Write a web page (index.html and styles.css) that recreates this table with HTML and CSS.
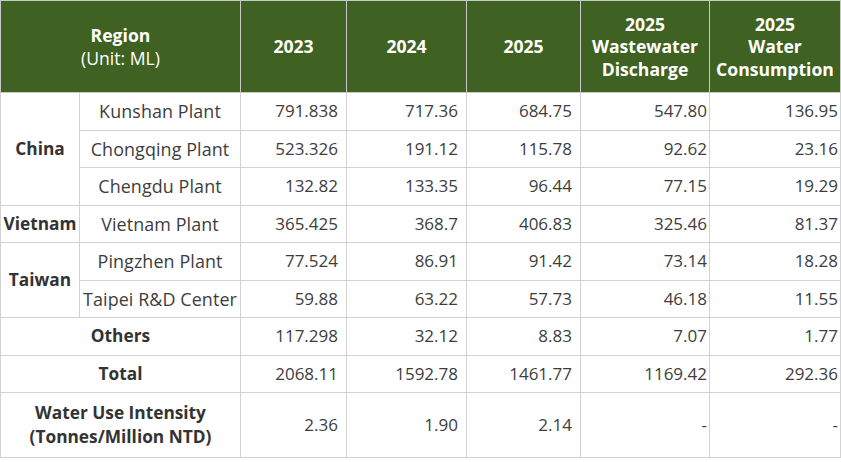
FILE: index.html
```html
<!DOCTYPE html>
<html lang="en">
<head>
<meta charset="utf-8">
<title>Water Use by Region</title>
<link rel="stylesheet" href="styles.css">
</head>
<body>
<table class="water-table">
  <colgroup>
    <col class="c-region">
    <col class="c-site">
    <col class="c-2023">
    <col class="c-2024">
    <col class="c-2025">
    <col class="c-waste">
    <col class="c-cons">
  </colgroup>
  <thead>
    <tr>
      <th colspan="2"><span class="strong">Region</span><br><span class="unit">(Unit: ML)</span></th>
      <th>2023</th>
      <th>2024</th>
      <th>2025</th>
      <th>2025<br>Wastewater<br>Discharge</th>
      <th>2025<br>Water<br>Consumption</th>
    </tr>
  </thead>
  <tbody>
    <tr>
      <td class="group" rowspan="3">China</td>
      <td class="site">Kunshan Plant</td>
      <td class="num">791.838</td><td class="num">717.36</td><td class="num">684.75</td><td class="num tight">547.80</td><td class="num tight">136.95</td>
    </tr>
    <tr>
      <td class="site">Chongqing Plant</td>
      <td class="num">523.326</td><td class="num">191.12</td><td class="num">115.78</td><td class="num tight">92.62</td><td class="num tight">23.16</td>
    </tr>
    <tr>
      <td class="site">Chengdu Plant</td>
      <td class="num">132.82</td><td class="num">133.35</td><td class="num">96.44</td><td class="num tight">77.15</td><td class="num tight">19.29</td>
    </tr>
    <tr>
      <td class="group">Vietnam</td>
      <td class="site">Vietnam Plant</td>
      <td class="num">365.425</td><td class="num">368.7</td><td class="num">406.83</td><td class="num tight">325.46</td><td class="num tight">81.37</td>
    </tr>
    <tr>
      <td class="group" rowspan="2">Taiwan</td>
      <td class="site">Pingzhen Plant</td>
      <td class="num">77.524</td><td class="num">86.91</td><td class="num">91.42</td><td class="num tight">73.14</td><td class="num tight">18.28</td>
    </tr>
    <tr>
      <td class="site">Taipei R&amp;D Center</td>
      <td class="num">59.88</td><td class="num">63.22</td><td class="num">57.73</td><td class="num tight">46.18</td><td class="num tight">11.55</td>
    </tr>
    <tr>
      <td class="group" colspan="2">Others</td>
      <td class="num">117.298</td><td class="num">32.12</td><td class="num">8.83</td><td class="num tight">7.07</td><td class="num tight">1.77</td>
    </tr>
    <tr>
      <td class="group" colspan="2">Total</td>
      <td class="num">2068.11</td><td class="num">1592.78</td><td class="num">1461.77</td><td class="num tight">1169.42</td><td class="num tight">292.36</td>
    </tr>
    <tr class="intensity">
      <td class="group" colspan="2">Water Use Intensity<br>(Tonnes/Million NTD)</td>
      <td class="num">2.36</td><td class="num">1.90</td><td class="num">2.14</td><td class="num tight">-</td><td class="num tight">-</td>
    </tr>
  </tbody>
</table>
</body>
</html>
```

FILE: styles.css
```css
html, body {
  margin: 0;
  padding: 0;
  background: #ffffff;
}

body {
  font-family: "Open Sans", "Noto Sans", "Liberation Sans", sans-serif;
  font-size: 17px;
  color: #3d3d3d;
}

.water-table {
  border-collapse: collapse;
  table-layout: fixed;
  width: 840px;
  border: 1px solid #c4c4c4;
}

.c-region { width: 79px; }
.c-site { width: 161px; }
.c-2023 { width: 106px; }
.c-2024 { width: 120px; }
.c-2025 { width: 114px; }
.c-waste { width: 129px; }
.c-cons { width: 131px; }

.water-table th,
.water-table td {
  border: 1px solid #d2d2d2;
  padding: 0;
  vertical-align: middle;
  white-space: nowrap;
}

.water-table thead tr {
  height: 92px;
}

.water-table th {
  background: #3f6121;
  color: #ffffff;
  font-weight: 700;
  font-size: 17.6px;
  text-align: center;
  line-height: 22.5px;
  border-color: #c9c9c9;
}

.water-table th .unit {
  font-weight: 400;
}

.water-table tbody tr {
  height: 37.5px;
}

.water-table tbody tr.intensity {
  height: 65px;
}

.water-table td {
  line-height: 22px;
}

.group {
  font-weight: 700;
  font-size: 17.3px;
  text-align: center;
  color: #333333;
}

.intensity .group {
  line-height: 24px;
}

.site {
  text-align: center;
  font-size: 17.9px;
  letter-spacing: 0.1px;
}

.num {
  text-align: right;
  padding-right: 8px !important;
}

.num.tight {
  padding-right: 2px !important;
}
```
